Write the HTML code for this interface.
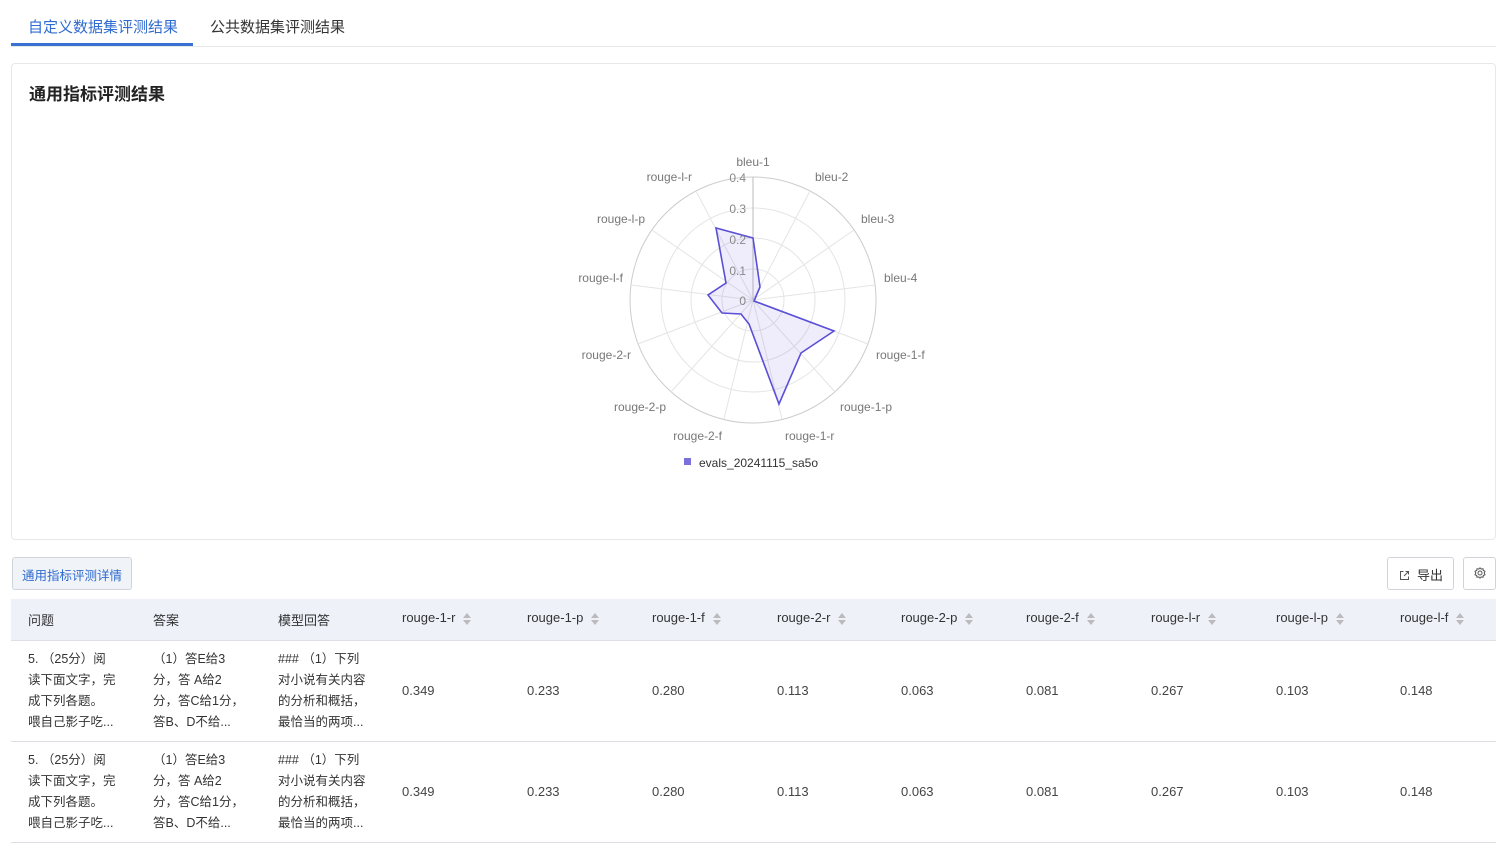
<!DOCTYPE html>
<html><head><meta charset="utf-8"><style>
*{margin:0;padding:0;box-sizing:border-box}
body{width:1500px;height:846px;background:#fff;font-family:"Liberation Sans","Noto Sans CJK SC",sans-serif;color:#333;position:relative;overflow:hidden}
.abs{position:absolute;white-space:nowrap}
.tabs{position:absolute;left:11px;top:0;width:1485px;height:47px;border-bottom:1px solid #e8e8e8}
.card{position:absolute;left:11px;top:63px;width:1485px;height:477px;border:1px solid #e6e8eb;border-radius:4px}
.btn{position:absolute;border:1px solid #d0d4da;border-radius:3px;font-size:13px}
.thead{position:absolute;left:11px;top:599px;width:1485px;height:42px;background:#eef2f8;border-bottom:1px solid #dde1e7}
.row{position:absolute;left:11px;width:1485px;border-bottom:1px solid #dde1e7}
.th{position:absolute;top:11px;font-size:13px;color:#333}
.cell{position:absolute;font-size:12.5px;line-height:21px;color:#333}
.num{position:absolute;font-size:13px;color:#444}
.sort{display:inline-block;margin-left:8px;vertical-align:middle;width:8px;height:12px;position:relative}
.sort:before{content:"";position:absolute;left:0;top:0;border:4px solid transparent;border-bottom:5px solid #bbb;border-top:0}
.sort:after{content:"";position:absolute;left:0;top:7px;border:4px solid transparent;border-top:5px solid #bbb;border-bottom:0}
</style></head><body>
<div class="tabs"></div>
<div class="abs" style="left:28px;top:16px;font-size:15px;color:#2f6bd0">自定义数据集评测结果</div>
<div class="abs" style="left:11px;top:43px;width:182px;height:3px;background:#3a72d4"></div>
<div class="abs" style="left:210px;top:16px;font-size:15px;color:#333">公共数据集评测结果</div>
<div class="card"></div>
<div class="abs" style="left:29px;top:80px;font-size:17px;font-weight:bold;color:#222">通用指标评测结果</div>
<svg class="abs" style="left:0;top:0" width="1500" height="540" font-family="Liberation Sans" font-size="12" fill="#777">
<g transform="translate(753,300)" fill="none" stroke="#e4e4e4">
<circle r="31"/><circle r="62"/><circle r="92"/><circle r="123" stroke="#ccc"/>
<path d="M0 0L57 -109M0 0L101 -70M0 0L122 -15M0 0L115 44M0 0L82 92M0 0L29 119M0 0L-29 119M0 0L-82 92M0 0L-115 44M0 0L-122 -15M0 0L-101 -70M0 0L-57 -109"/>
<path d="M0 0L0 -123" stroke="#bbb"/>
</g>
<polygon points="753,238 760,287 754,301 834,331 801,353 779,404 749,324 741,314 722,313 708,295 726,283 716,228" fill="rgba(120,110,230,0.12)" stroke="#5a4fd6" stroke-width="1.6"/>
<g fill="#888" text-anchor="end"><text x="746" y="182">0.4</text><text x="746" y="213">0.3</text><text x="746" y="244">0.2</text><text x="746" y="275">0.1</text><text x="746" y="305">0</text></g>
<text x="753" y="166" text-anchor="middle">bleu-1</text>
<text x="815" y="181">bleu-2</text>
<text x="861" y="223">bleu-3</text>
<text x="884" y="282">bleu-4</text>
<text x="876" y="359">rouge-1-f</text>
<text x="840" y="411">rouge-1-p</text>
<text x="785" y="440">rouge-1-r</text>
<text x="722" y="440" text-anchor="end">rouge-2-f</text>
<text x="666" y="411" text-anchor="end">rouge-2-p</text>
<text x="631" y="359" text-anchor="end">rouge-2-r</text>
<text x="623" y="282" text-anchor="end">rouge-l-f</text>
<text x="645" y="223" text-anchor="end">rouge-l-p</text>
<text x="692" y="181" text-anchor="end">rouge-l-r</text>
<rect x="684" y="458" width="7" height="7" fill="#7b6fe0"/>
<text x="699" y="467" fill="#333">evals_20241115_sa5o</text>
</svg>
<div class="btn" style="left:12px;top:557px;width:120px;height:33px;background:#f0f3f8;color:#2f6bd0;padding:7px 0 0 9px;font-size:12.5px">通用指标评测详情</div>
<div class="btn" style="left:1387px;top:557px;width:67px;height:33px;padding:7px 0 0 11px;color:#333"><svg width="11" height="11" viewBox="0 0 11 11" style="margin-right:7px;vertical-align:-1px" fill="none" stroke="#555" stroke-width="1"><path d="M4.5 1.5H1.5V9.5H9.5V6.5M6.5 1.5H9.5V4.5M9.5 1.5L5 6"/></svg>导出</div>
<div class="btn" style="left:1463px;top:557px;width:33px;height:33px;text-align:center;padding-top:9px"><svg width="12" height="12" viewBox="0 0 12 12" fill="none" stroke="#555" stroke-width="1"><circle cx="6" cy="6" r="2"/><path d="M6 0.8L7.2 2.1L9 1.7L9.3 3.5L11 4.3L10.2 6L11 7.7L9.3 8.5L9 10.3L7.2 9.9L6 11.2L4.8 9.9L3 10.3L2.7 8.5L1 7.7L1.8 6L1 4.3L2.7 3.5L3 1.7L4.8 2.1Z"/></svg></div>
<div class="thead">
<div class="th" style="left:17px">问题</div>
<div class="th" style="left:142px">答案</div>
<div class="th" style="left:267px">模型回答</div>
<div class="th" style="left:391px">rouge-1-r<span class="sort"></span></div>
<div class="th" style="left:516px">rouge-1-p<span class="sort"></span></div>
<div class="th" style="left:641px">rouge-1-f<span class="sort"></span></div>
<div class="th" style="left:766px">rouge-2-r<span class="sort"></span></div>
<div class="th" style="left:890px">rouge-2-p<span class="sort"></span></div>
<div class="th" style="left:1015px">rouge-2-f<span class="sort"></span></div>
<div class="th" style="left:1140px">rouge-l-r<span class="sort"></span></div>
<div class="th" style="left:1265px">rouge-l-p<span class="sort"></span></div>
<div class="th" style="left:1389px">rouge-l-f<span class="sort"></span></div>
</div>
<div class="row" style="top:641px;height:101px">
<div class="cell" style="left:17px;top:8px">5. （25分）阅<br>读下面文字，完<br>成下列各题。<br>喂自己影子吃...</div>
<div class="cell" style="left:142px;top:8px">（1）答E给3<br>分，答 A给2<br>分，答C给1分，<br>答B、D不给...</div>
<div class="cell" style="left:267px;top:8px">### （1）下列<br>对小说有关内容<br>的分析和概括，<br>最恰当的两项...</div>
<div class="num" style="left:391px;top:42px">0.349</div><div class="num" style="left:516px;top:42px">0.233</div><div class="num" style="left:641px;top:42px">0.280</div><div class="num" style="left:766px;top:42px">0.113</div><div class="num" style="left:890px;top:42px">0.063</div><div class="num" style="left:1015px;top:42px">0.081</div><div class="num" style="left:1140px;top:42px">0.267</div><div class="num" style="left:1265px;top:42px">0.103</div><div class="num" style="left:1389px;top:42px">0.148</div>
</div>
<div class="row" style="top:742px;height:101px">
<div class="cell" style="left:17px;top:8px">5. （25分）阅<br>读下面文字，完<br>成下列各题。<br>喂自己影子吃...</div>
<div class="cell" style="left:142px;top:8px">（1）答E给3<br>分，答 A给2<br>分，答C给1分，<br>答B、D不给...</div>
<div class="cell" style="left:267px;top:8px">### （1）下列<br>对小说有关内容<br>的分析和概括，<br>最恰当的两项...</div>
<div class="num" style="left:391px;top:42px">0.349</div><div class="num" style="left:516px;top:42px">0.233</div><div class="num" style="left:641px;top:42px">0.280</div><div class="num" style="left:766px;top:42px">0.113</div><div class="num" style="left:890px;top:42px">0.063</div><div class="num" style="left:1015px;top:42px">0.081</div><div class="num" style="left:1140px;top:42px">0.267</div><div class="num" style="left:1265px;top:42px">0.103</div><div class="num" style="left:1389px;top:42px">0.148</div>
</div>
</body></html>
